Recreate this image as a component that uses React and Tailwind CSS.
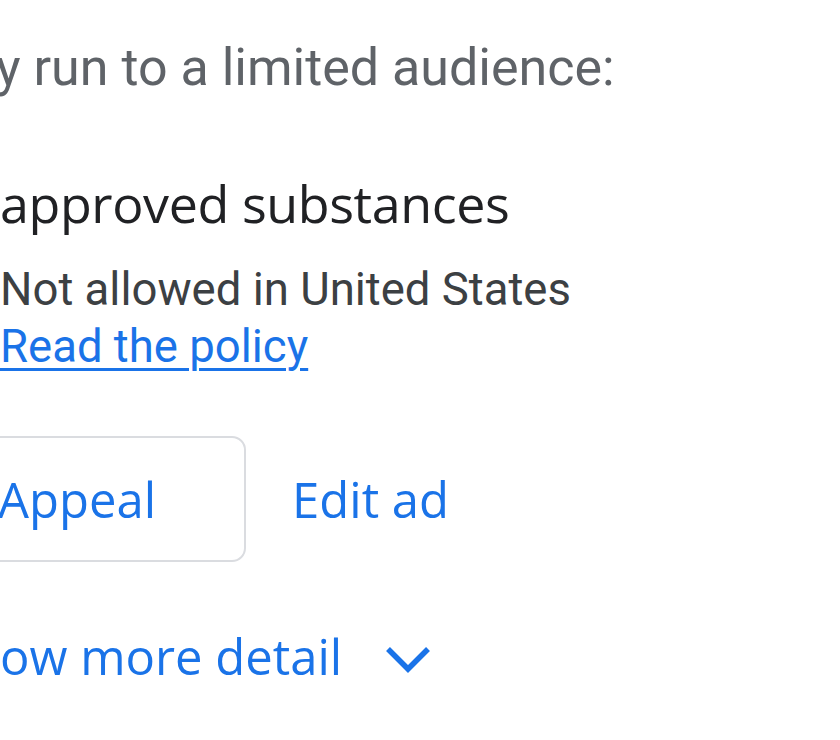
import React from 'react'

const sans = { fontFamily: '"Open Sans", "Noto Sans", sans-serif' }

function ChevronDown() {
  return (
    <svg viewBox="0 0 48 30" className="w-[48px] h-[30px] shrink-0 mt-[19px]" fill="none">
      <path d="M4 4L24 24L44 4" stroke="#1a73e8" strokeWidth="5.5" />
    </svg>
  )
}

export default function App() {
  return (
    <div className="w-[840px] h-[740px] overflow-hidden bg-white font-['Roboto',sans-serif]">
      <div className="flex flex-col whitespace-nowrap">
        {/* Intro */}
        <p className="mt-[36px] -ml-[4px] text-[52px] leading-[64px] text-[#5f6368]">
          y run to a limited audience:
        </p>

        {/* Policy */}
        <h2
          className="mt-[71px] text-[52px] leading-[64px] font-medium tracking-[-0.4px] text-[#202124]"
          style={sans}
        >
          <span className="inline-block w-[90px] -ml-[90px] text-right">Un</span>approved substances
        </h2>
        <p className="mt-[26px] text-[45.5px] leading-[57px] text-[#3c4043]">
          Not allowed in United States
        </p>
        <a
          href="#"
          className="text-[45.5px] leading-[57px] text-[#1a73e8] underline decoration-[3px] underline-offset-[6px] self-start"
        >
          Read the policy
        </a>

        {/* Actions */}
        <div className="mt-[61px] -ml-[86px] flex items-center gap-[46px]" style={sans}>
          <button className="h-[126px] pl-[82px] pr-[88px] border-[2.5px] border-[#dadce0] rounded-[14px] text-[49px] font-medium text-[#1a73e8] leading-[60px]">
            Appeal
          </button>
          <span className="text-[49px] font-medium text-[#1a73e8] leading-[60px]">Edit ad</span>
        </div>

        {/* More */}
        <div className="mt-[64px] flex items-start gap-[42px]" style={sans}>
          <span className="text-[49px] font-medium text-[#1a73e8] leading-[60px]">
            <span className="inline-block w-[120px] -ml-[120px] text-right">Sh</span>ow more detail
          </span>
          <ChevronDown />
        </div>
      </div>
    </div>
  )
}
